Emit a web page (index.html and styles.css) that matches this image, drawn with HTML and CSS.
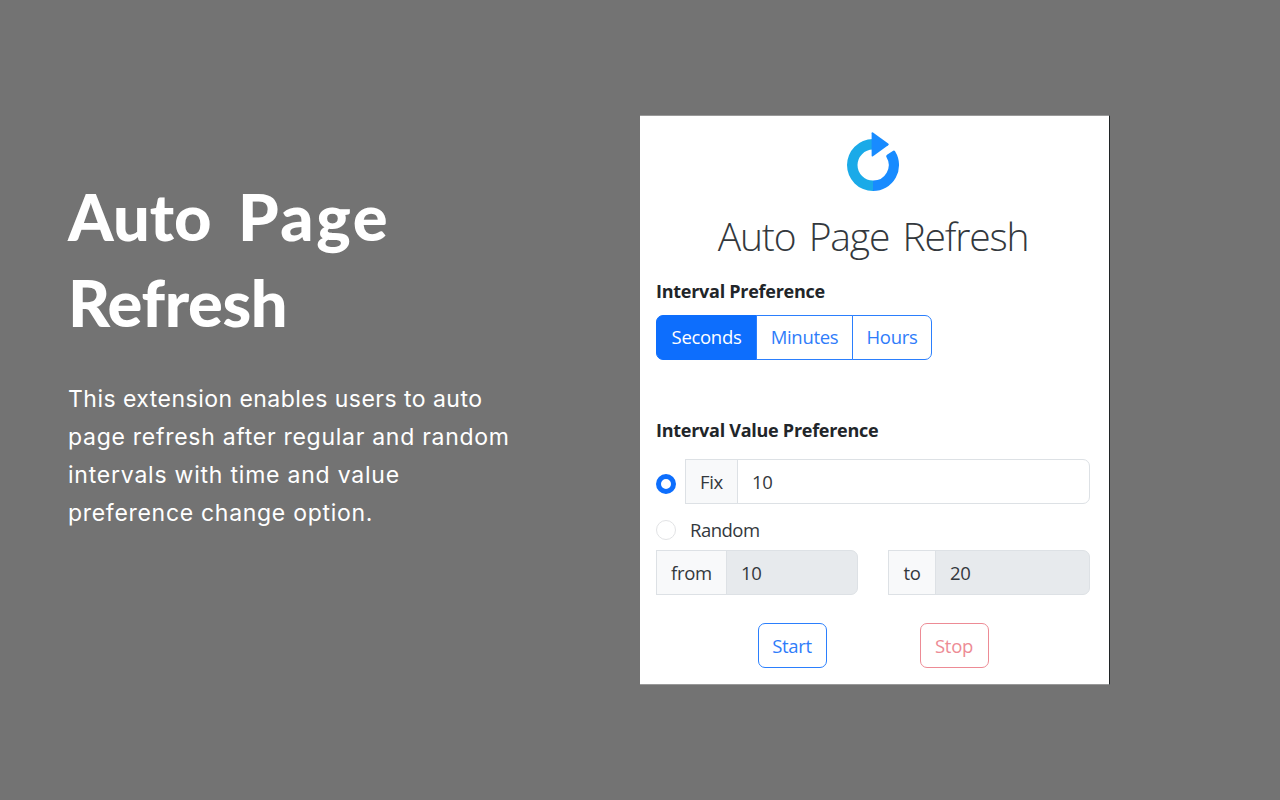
FILE: index.html
```html
<!DOCTYPE html>
<html lang="en">
<head>
<meta charset="utf-8">
<title>Auto Page Refresh</title>
<link rel="stylesheet" href="styles.css">
</head>
<body>
<main class="promo">
  <section class="intro">
    <h1 class="headline"><span class="h-auto">Auto</span> <span class="h-page">Page</span><br><span class="h-refresh">Refresh</span></h1>
    <p class="summary"><span class="l1">This extension enables users to auto</span><br><span class="l2">page refresh after regular and random</span><br><span class="l3">intervals with time and value</span><br><span class="l4">preference change option.</span></p>
  </section>
  <section class="popup">
    <svg class="logo" viewBox="0 0 54 60" width="54" height="60">
      <path fill="#1aaae8" d="M27 7.1A26 26 0 0 0 27 59.1V48.6A15.5 15.5 0 0 1 27 17.6Z"/>
      <path fill="#188bff" d="M25.6 1.2Q25.6-.3 27 .4L42.2 11.4Q43.4 12.3 42.2 13.3L27 24.2Q25.6 25 25.6 23.4Z"/>
      <path fill="#188bff" d="M27 59.1A26 26 0 0 0 49.2 19.5Q48.2 18 46.8 19L41 22.8Q39.8 23.8 40.4 25A15.5 15.5 0 0 1 27 48.6Z"/>
    </svg>
    <h2 class="title"><span>Auto Page Refresh</span></h2>
    <h3 class="label">Interval Preference</h3>
    <div class="units">
      <button class="unit active">Seconds</button><button class="unit minutes">Minutes</button><button class="unit hours">Hours</button>
    </div>
    <h3 class="label value-label">Interval Value Preference</h3>
    <div class="fixed-row">
      <i class="radio checked"></i>
      <div class="group"><span class="addon fix">Fix</span><span class="field">10</span></div>
    </div>
    <div class="random-row"><i class="radio"></i><span>Random</span></div>
    <div class="range">
      <div class="group"><span class="addon from">from</span><span class="field off">10</span></div>
      <div class="group"><span class="addon to">to</span><span class="field off">20</span></div>
    </div>
    <div class="actions"><button class="btn">Start</button><button class="btn stop">Stop</button></div>
  </section>
</main>
</body>
</html>
```
FILE: styles.css
```css
* { box-sizing: border-box; }
body { margin: 0; background: #737373; }
h1, h2, h3, p { margin: 0; }
.promo { display: flex; width: 1280px; height: 800px; padding-top: 115px; align-items: flex-start; overflow: hidden; }
.intro { width: 640px; padding: 58px 0 0 68px; color: #fff; }
.headline { font: 900 65px/86px Lato, sans-serif; white-space: nowrap; }
.h-page { margin-left: 11px; letter-spacing: 2.6px; }
.h-refresh { letter-spacing: -.4px; }
.summary { margin-top: 35px; font: 400 23px/38px Inter, sans-serif; white-space: nowrap; }
.l1 { letter-spacing: .47px; }
.l2 { letter-spacing: .72px; }
.l3 { letter-spacing: .78px; }
.l4 { letter-spacing: .7px; }
.popup { display: flex; flex-direction: column; width: 470px; height: 570px; padding: 16px 19px 0 16px; background: #fff; border: solid #999; border-width: 1px 1px 1px 0; border-right-color: #202426; color: #33383d; font: 400 18.5px/28px "Open Sans", "Noto Sans", sans-serif; letter-spacing: -.3px; }
.logo { align-self: center; flex: none; }
.title { margin-top: 15px; height: 58px; text-align: center; font-weight: 300; font-size: 39px; line-height: 58px; letter-spacing: -1.2px; word-spacing: 4.5px; white-space: nowrap; }
.label { height: 28px; margin-top: 12px; color: #212529; font-size: 18px; line-height: 28px; font-weight: 700; letter-spacing: -.27px; }
.units { display: flex; height: 45px; margin-top: 10px; line-height: 26px; }
button { padding: 0; font: inherit; letter-spacing: inherit; background: #fff; color: #2f7cfa; border: 1px solid #2b7ffd; }
.unit { height: 45px; padding-bottom: 1px; }
.active { width: 101px; background: #0d6efd; color: #fff; border-color: #0d6efd; border-radius: 7px 0 0 7px; }
.minutes { width: 97px; margin-left: -1px; }
.hours { width: 80px; margin-left: -1px; border-radius: 0 7px 7px 0; }
.value-label { margin-top: 56px; }
.fixed-row { display: flex; align-items: center; gap: 9px; margin-top: 15px; }
.fixed-row .group { flex: 1; }
.radio { flex: none; width: 20px; height: 20px; border: 1.5px solid #e2e3e5; border-radius: 50%; }
.checked { margin-top: 4px; border: 5.5px solid #0d6efd; }
.group { display: flex; height: 45px; line-height: 43px; }
.addon { border: 1px solid #dde1e5; background: #f8f9fa; text-align: center; }
.fix { width: 53px; }
.from { width: 71px; }
.to { width: 48px; }
.field { flex: 1; margin-left: -1px; padding-left: 14px; border: 1px solid #dde1e5; border-radius: 0 7px 7px 0; }
.off { background: #e7eaed; }
.random-row { display: flex; align-items: center; gap: 14px; height: 28px; margin-top: 12px; }
.random-row span { letter-spacing: -.5px; }
.range { display: grid; grid-template-columns: 202px 202px; gap: 30px; margin-top: 6px; }
.actions { display: flex; gap: 93px; margin: 28px 0 0 101.5px; }
.btn { width: 69px; height: 45px; border-radius: 7px; }
.stop { color: #ed8b95; border-color: #ed8b95; }
```
